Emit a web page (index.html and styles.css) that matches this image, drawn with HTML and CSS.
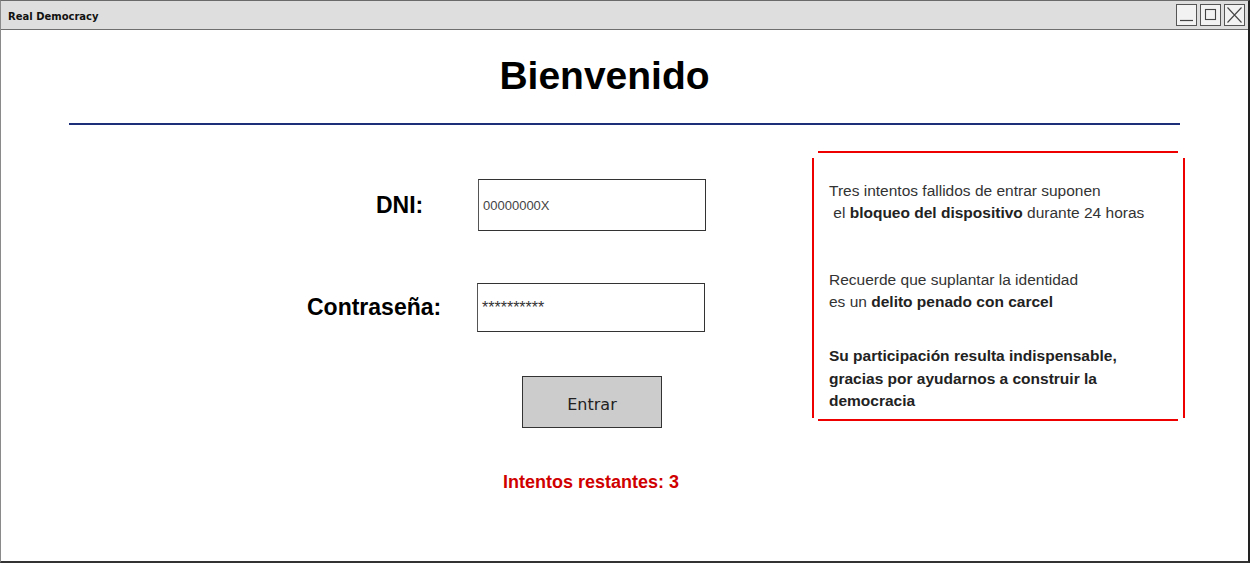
FILE: index.html
```html
<!DOCTYPE html>
<html lang="es">
<head>
<meta charset="utf-8">
<title>Real Democracy</title>
<link rel="stylesheet" href="styles.css">
</head>
<body>
<div class="window">
  <div class="titlebar">
    <span class="title">Real Democracy</span>
    <div class="controls">
      <span class="ctl"><svg width="19" height="20" viewBox="0 0 19 20"><line x1="3" y1="15.5" x2="16" y2="15.5" stroke="#444" stroke-width="1.2"/></svg></span>
      <span class="ctl"><svg width="19" height="20" viewBox="0 0 19 20"><rect x="4.5" y="4.5" width="10" height="10" fill="none" stroke="#444" stroke-width="1.1"/></svg></span>
      <span class="ctl"><svg width="19" height="20" viewBox="0 0 19 20"><path d="M2.5 2.5 L16.5 17.5 M16.5 2.5 L2.5 17.5" stroke="#444" stroke-width="1.1" fill="none"/></svg></span>
    </div>
  </div>
  <div class="main">
    <h1 class="heading">Bienvenido</h1>
    <div class="rule"></div>
    <div class="content">
      <div class="form">
        <div class="row row-dni">
          <label class="label label-dni">DNI:</label>
          <div class="input input-dni">00000000X</div>
        </div>
        <div class="row row-pass">
          <label class="label label-pass">Contraseña:</label>
          <div class="input input-pass">**********</div>
        </div>
        <div class="row row-btn">
          <button class="btn">Entrar</button>
        </div>
        <div class="attempts">Intentos restantes: 3</div>
      </div>
      <div class="notice">
        <div class="hline"></div>
        <div class="notice-body">
          <div class="vline"></div>
          <div class="notice-text">
            <p class="p1">Tres intentos fallidos de entrar suponen<br>&nbsp;el <b>bloqueo del dispositivo</b> durante 24 horas</p>
            <p class="p2">Recuerde que suplantar la identidad<br>es un <b>delito penado con carcel</b></p>
            <p class="p3">Su participación resulta indispensable, gracias por ayudarnos a construir la democracia</p>
          </div>
          <div class="vline"></div>
        </div>
        <div class="hline hline-bottom"></div>
      </div>
    </div>
  </div>
</div>
</body>
</html>
```

FILE: styles.css
```css
* { box-sizing: border-box; }
html, body { margin: 0; padding: 0; background: #fff; }
body { width: 1251px; height: 563px; overflow: hidden; font-family: "Liberation Sans", Arial, sans-serif; }

.window {
  width: 1250px;
  height: 563px;
  border-top: 1px solid #6a6a6a;
  border-left: 1px solid #8a8a8a;
  border-right: 2px solid #222;
  border-bottom: 2px solid #333;
  background: #fff;
  display: flex;
  flex-direction: column;
}

.titlebar {
  height: 29px;
  flex: none;
  background: #dedede;
  border-bottom: 1px solid #6e6e6e;
  display: flex;
  align-items: center;
  justify-content: space-between;
  padding: 0 3px 0 7px;
}
.title {
  font-family: "DejaVu Sans", sans-serif;
  font-weight: bold;
  font-size: 10px;
  color: #111;
  margin-top: 2px;
}
.controls { display: flex; gap: 3px; align-items: center; }
.ctl {
  width: 21px;
  height: 22px;
  border: 1px solid #555;
  background: #f2f2f2;
  display: flex;
  align-items: center;
  justify-content: center;
}
.ctl svg { display: block; }

.main { flex: 1; display: flex; flex-direction: column; }

.heading {
  margin: 23px 0 0 0;
  text-align: center;
  font-size: 39px;
  line-height: 45px;
  font-weight: bold;
  color: #000;
  padding-right: 40px;
}

.rule {
  margin: 25px 0 0 68px;
  width: 1111px;
  height: 2px;
  background: #1c2f78;
}

.content { display: flex; align-items: flex-start; }

.form {
  margin-left: 299px;
  width: 406px;
  display: flex;
  flex-direction: column;
}
.row { display: flex; align-items: center; }
.row-dni { margin-top: 54px; }
.row-pass { margin-top: 52px; }
.label {
  width: 177px;
  font-size: 23px;
  font-weight: bold;
  color: #000;
}
.label-dni { padding-left: 76px; }
.label-pass { padding-left: 7px; }
.input {
  border: 1px solid #333;
  border-left-color: #555;
  background: #fff;
  display: flex;
  align-items: center;
}
.input-dni {
  width: 228px;
  height: 52px;
  padding-left: 4px;
  font-size: 13px;
  color: #444;
  margin-left: 1px;
}
.input-pass {
  width: 228px;
  height: 49px;
  padding-left: 4px;
  font-size: 16px;
  color: #333;
}
.row-btn { margin-top: 44px; padding-left: 222px; }
.btn {
  width: 140px;
  height: 52px;
  background: #cccccc;
  border: 1px solid #333;
  font-family: "DejaVu Sans", sans-serif;
  font-size: 16px;
  color: #222;
  padding: 4px 0 0 0;
  margin: 0;
}
.attempts {
  margin-top: 44px;
  padding-left: 203px;
  font-size: 18px;
  line-height: 21px;
  font-weight: bold;
  color: #d00000;
}

.notice {
  margin-left: 106px;
  margin-top: 26px;
  width: 373px;
  display: flex;
  flex-direction: column;
}
.hline {
  height: 2px;
  margin: 0 7px 0 6px;
  background: #ee0000;
}
.hline-bottom { margin-top: 1px; }
.notice-body { display: flex; margin-top: 5px; }
.vline { width: 2px; background: #ee0000; flex: none; }
.notice-text {
  flex: 1;
  padding: 22px 10px 5px 15px;
  font-size: 15.5px;
  color: #333;
}
.notice-text p { margin: 0; line-height: 22px; }
.notice-text b { color: #222; }
.p2 { margin-top: 45px !important; }
.p3 {
  margin-top: 32px !important;
  font-weight: bold;
  color: #222;
  line-height: 22.5px !important;
  width: 300px;
}
```
